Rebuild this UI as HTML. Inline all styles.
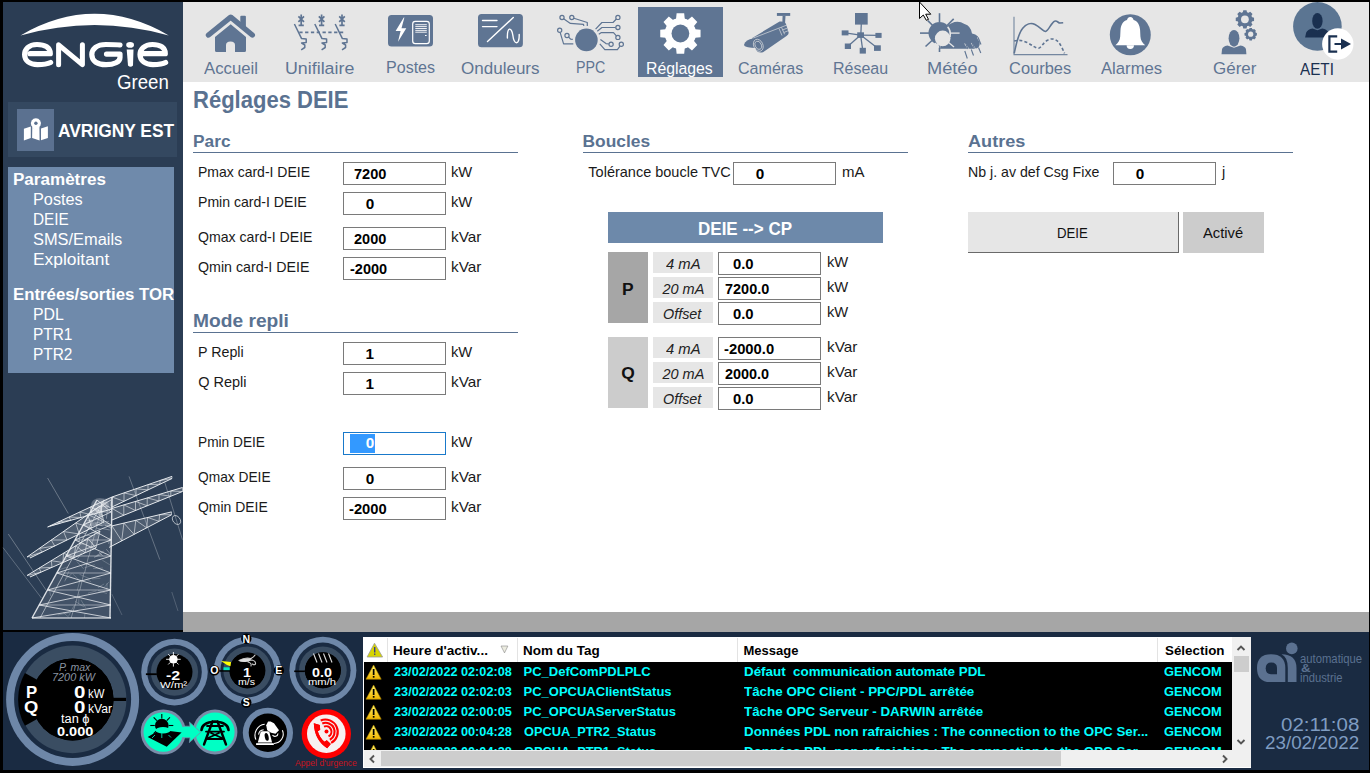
<!DOCTYPE html><html><head><meta charset="utf-8"><style>
html,body{margin:0;padding:0;width:1370px;height:773px;overflow:hidden;background:#000;}
body{position:relative;font-family:"Liberation Sans",sans-serif;}
body>div,body>span,body>svg{position:absolute;}
.t{white-space:pre;transform-origin:0 0;display:block;}
</style></head><body>
<div style="left:0px;top:0px;width:1370px;height:773px;background:#000;"></div>
<div style="left:3px;top:2px;width:180px;height:628px;background:#2b3d54;"></div>
<div style="left:183px;top:2px;width:1186px;height:80px;background:#e6e6e6;"></div>
<div style="left:183px;top:82px;width:1186px;height:530px;background:#ffffff;"></div>
<div style="left:183px;top:612px;width:1186px;height:20px;background:#a6a6a6;"></div>
<div style="left:3px;top:632px;width:1366px;height:138px;background:#1a2b42;"></div>
<div style="left:8px;top:102px;width:169px;height:55px;background:#344860;"></div>
<div style="left:17px;top:109px;width:37px;height:42px;background:#5b7190;"></div>
<div style="left:8px;top:167px;width:166px;height:206px;background:#6f8aab;"></div>
<div style="left:638px;top:7px;width:85px;height:70px;background:#5f7593;"></div>
<div style="left:193px;top:152px;width:325px;height:1px;background:#5a7291;"></div>
<div style="left:193px;top:332px;width:325px;height:1px;background:#5a7291;"></div>
<div style="left:583px;top:152px;width:325px;height:1px;background:#5a7291;"></div>
<div style="left:968px;top:152px;width:325px;height:1px;background:#5a7291;"></div>
<div style="left:343px;top:162px;width:101px;height:21px;background:#fff;border:1px solid #7a7a7a;"></div>
<div style="left:343px;top:192px;width:101px;height:21px;background:#fff;border:1px solid #7a7a7a;"></div>
<div style="left:343px;top:227px;width:101px;height:21px;background:#fff;border:1px solid #7a7a7a;"></div>
<div style="left:343px;top:257px;width:101px;height:21px;background:#fff;border:1px solid #7a7a7a;"></div>
<div style="left:343px;top:342px;width:101px;height:21px;background:#fff;border:1px solid #7a7a7a;"></div>
<div style="left:343px;top:372px;width:101px;height:21px;background:#fff;border:1px solid #7a7a7a;"></div>
<div style="left:343px;top:432px;width:101px;height:21px;background:#fff;border:1px solid #1979ca;"></div>
<div style="left:350px;top:434px;width:25px;height:19px;background:#3399ff;"></div>
<div style="left:343px;top:467px;width:101px;height:21px;background:#fff;border:1px solid #7a7a7a;"></div>
<div style="left:343px;top:497px;width:101px;height:21px;background:#fff;border:1px solid #7a7a7a;"></div>
<div style="left:733px;top:162px;width:101px;height:21px;background:#fff;border:1px solid #7a7a7a;"></div>
<div style="left:1113px;top:162px;width:101px;height:21px;background:#fff;border:1px solid #7a7a7a;"></div>
<div style="left:608px;top:212px;width:275px;height:31px;background:#6d89aa;"></div>
<div style="left:608px;top:252px;width:40px;height:71px;background:#a6a6a6;"></div>
<div style="left:608px;top:337px;width:40px;height:71px;background:#cccccc;"></div>
<div style="left:653px;top:252px;width:60px;height:21px;background:#e6e6e6;"></div>
<div style="left:718px;top:252px;width:101px;height:21px;background:#fff;border:1px solid #7a7a7a;"></div>
<div style="left:653px;top:277px;width:60px;height:21px;background:#e6e6e6;"></div>
<div style="left:718px;top:277px;width:101px;height:21px;background:#fff;border:1px solid #7a7a7a;"></div>
<div style="left:653px;top:302px;width:60px;height:21px;background:#e6e6e6;"></div>
<div style="left:718px;top:302px;width:101px;height:21px;background:#fff;border:1px solid #7a7a7a;"></div>
<div style="left:653px;top:337px;width:60px;height:21px;background:#e6e6e6;"></div>
<div style="left:718px;top:337px;width:101px;height:21px;background:#fff;border:1px solid #7a7a7a;"></div>
<div style="left:653px;top:362px;width:60px;height:21px;background:#e6e6e6;"></div>
<div style="left:718px;top:362px;width:101px;height:21px;background:#fff;border:1px solid #7a7a7a;"></div>
<div style="left:653px;top:387px;width:60px;height:21px;background:#e6e6e6;"></div>
<div style="left:718px;top:387px;width:101px;height:21px;background:#fff;border:1px solid #7a7a7a;"></div>
<div style="left:968px;top:212px;width:211px;height:41px;background:#e6e6e6;box-shadow:inset -1px -1px 0 #6a6a6a;"></div>
<div style="left:1183px;top:212px;width:81px;height:41px;background:#cccccc;"></div>
<div style="left:363px;top:637px;width:888px;height:131px;background:#ffffff;"></div>
<div style="left:364px;top:662px;width:868px;height:88px;background:#000000;"></div>
<div style="left:387px;top:638px;width:1px;height:24px;background:#e3e3e3;"></div>
<div style="left:517px;top:638px;width:1px;height:24px;background:#e3e3e3;"></div>
<div style="left:737px;top:638px;width:1px;height:24px;background:#e3e3e3;"></div>
<div style="left:1157px;top:638px;width:1px;height:24px;background:#e3e3e3;"></div>
<div style="left:1232px;top:637px;width:19px;height:113px;background:#f0f0f0;"></div>
<div style="left:1234px;top:655.5px;width:14.5px;height:16px;background:#cdcdcd;"></div>
<svg width="1370" height="773" viewBox="0 0 1370 773" style="position:absolute;left:0;top:0;">
<path d="M20.5,35.4 Q94.6,-7.75 168.8,35.4 Q94.6,14.4 20.5,35.4 Z" fill="#ffffff"/>
<g fill="none" stroke="#ffffff" stroke-width="5" stroke-linecap="round" stroke-linejoin="round"><path d="M30,53.7 L50.3,53.7 C50.3,47.5 45,44.5 37,44.5 C28.5,44.5 24.6,49.5 24.6,54.6 C24.6,61 30,64.6 37.5,64.6 C43.5,64.6 47.5,64 50.6,62.5" stroke-width="5.2"/><path d="M58.6,64.7 L58.6,44.8 L82.4,64.7 L82.4,44.8" stroke-width="5"/><path d="M120,45 C116,44.5 112,44.5 106,44.5 C97,44.5 91.8,48.8 91.8,54.6 C91.8,61 97,64.7 106,64.7 C114,64.7 120,62 120,57.5 L120,54.1 L106.5,54.1" stroke-width="5.2"/><path d="M141,53.7 L165.3,53.7 C165.3,47.5 160,44.5 152.5,44.5 C144,44.5 140,49.5 140,54.6 C140,61 145.5,64.6 153,64.6 C159,64.6 163,64 165.6,62.5" stroke-width="5.2"/></g>
<ellipse cx="130.1" cy="44.9" rx="3.9" ry="2.8" fill="#ffffff"/>
<path d="M126.7,49.5 L133.5,49.5 L133,65.5 Q130.5,68 128,65.5 Z" fill="#ffffff"/>
<g fill="#ffffff"><path d="M23.9,128.8 L30.8,126.5 L30.8,138 L23.9,140.6 Z"/><path d="M32.3,126.5 L35.9,131 L39.4,126.5 L39.6,140.4 L32.1,138 Z"/><path d="M41,128.6 L47.9,126.3 L47.9,137.9 L41,140.3 Z"/><path d="M35.9,132.5 L31.3,125.3 A5,5 0 1 1 40.5,125.3 Z"/></g>
<circle cx="35.9" cy="123.2" r="1.7" fill="#5b7190"/>
<g fill="#5f7593"><path d="M208.5,35 L230.7,17.2 L252.3,35" fill="none" stroke="#5f7593" stroke-width="5.4" stroke-linecap="round" stroke-linejoin="round"/><rect x="240.3" y="15.8" width="5.6" height="12" rx="1"/><path d="M215,37 L230.7,24.3 L246,37 L246,50.5 Q246,52 244.5,52 L235,52 L235,45 Q235,41.5 230.5,41.5 Q226,41.5 226,45 L226,52 L216.5,52 Q215,52 215,50.5 Z"/></g>
<path d="M206,37.5 L230.7,17.6 L255,37.5" fill="none" stroke="#e6e6e6" stroke-width="0" />
<g fill="none" stroke="#5f7593" stroke-linejoin="round"><path d="M301.2,14.5 L301.2,25 M298.4,16.3 L304.0,21.8 M304.0,16.3 L298.4,21.8 M298.59999999999997,25.3 L303.8,25.3" stroke-width="1.7"/><path d="M294.4,24 L301.59999999999997,38.6 L306.2,38.9 L306.2,42.6 L301.59999999999997,43 L304.8,45 L304.8,47.5 L301.2,49.8" stroke-width="1.5"/><path d="M321.6,14.5 L321.6,25 M318.8,16.3 L324.40000000000003,21.8 M324.40000000000003,16.3 L318.8,21.8 M319.0,25.3 L324.20000000000005,25.3" stroke-width="1.7"/><path d="M314.8,24 L322.0,38.6 L326.6,38.9 L326.6,42.6 L322.0,43 L325.20000000000005,45 L325.20000000000005,47.5 L321.6,49.8" stroke-width="1.5"/><path d="M342,14.5 L342,25 M339.2,16.3 L344.8,21.8 M344.8,16.3 L339.2,21.8 M339.4,25.3 L344.6,25.3" stroke-width="1.7"/><path d="M335.2,24 L342.4,38.6 L347,38.9 L347,42.6 L342.4,43 L345.6,45 L345.6,47.5 L342,49.8" stroke-width="1.5"/><path d="M299.3,32.4 L345,32.4" stroke-width="1.6" stroke-dasharray="3.3,2.5"/></g>
<rect x="388" y="14.9" width="45" height="31.7" rx="3.5" fill="#5f7593"/>
<path d="M403.8,17.4 L395.6,31 L400.6,31 L398,41.8 L406.3,28.3 L401.5,28.3 L404.4,17.4 Z" fill="#ffffff"/>
<rect x="412.7" y="21.4" width="16.6" height="22.2" rx="2.6" fill="none" stroke="#ffffff" stroke-width="1.2"/>
<g stroke="#ffffff" stroke-width="0.9"><line x1="415.3" y1="24.7" x2="426.8" y2="24.7"/><line x1="415.3" y1="26.6" x2="426.8" y2="26.6"/><line x1="415.3" y1="28.5" x2="426.8" y2="28.5"/><line x1="415.3" y1="30.4" x2="426.8" y2="30.4"/><line x1="415.3" y1="32.2" x2="426.8" y2="32.2"/></g>
<rect x="425" y="35" width="1.6" height="1" fill="#ffffff"/>
<rect x="478" y="13.9" width="44.9" height="33.3" rx="3.5" fill="#5f7593"/>
<g fill="none" stroke="#ffffff" stroke-width="1.4" stroke-linecap="round"><line x1="482.5" y1="20.5" x2="497" y2="20.5"/><line x1="482.5" y1="26.6" x2="497" y2="26.6"/><line x1="487.5" y1="41.5" x2="513.3" y2="17.5"/><path d="M507.4,38 C507,27 511.5,26.5 512.8,35 C514,45 519.5,46 519.2,34.5"/></g>
<circle cx="586.4" cy="39.9" r="11.3" fill="#5f7593"/>
<g fill="none" stroke="#5f7593" stroke-width="1.2" stroke-linejoin="round"><path d="M563.6,18.8 L570.4,23.4 L583.5,24.4 L583.8,26"/><path d="M573.9,18.3 L587.3,22.5 L587.3,26"/><path d="M560.2,32.6 L563.6,43.8 L573.3,43.8"/><path d="M568.5,37 L570.6,39.1 L572.8,39.3"/><path d="M616.4,19 L613,22.5 L601.9,22.5 L595.6,29.2"/><path d="M615.6,27.5 L601.9,27.5 L597.3,31.3"/><path d="M616.4,35.8 L613.5,32.6 L601.4,32.6 L598.8,34.2"/><path d="M608.9,44 L606,43.6 L600.4,39.6"/><path d="M620,46.2 L617.4,49.6 L604.8,49.6 L599.8,43.8"/><circle cx="562" cy="17.5" r="2.1"/><circle cx="571.8" cy="17.5" r="2.1"/><circle cx="559.7" cy="30.3" r="2.1"/><circle cx="567" cy="35.5" r="2.1"/><circle cx="617.9" cy="17.4" r="2.1"/><circle cx="617.9" cy="27.5" r="2.1"/><circle cx="617.9" cy="37.4" r="2.1"/><circle cx="611.1" cy="44.3" r="2.1"/><circle cx="621.3" cy="44.3" r="2.1"/></g>
<path d="M676.06,18.83 L676.62,13.35 L684.18,13.35 L684.74,18.83 L687.71,20.06 L691.98,16.58 L697.32,21.92 L693.84,26.19 L695.07,29.16 L700.55,29.72 L700.55,37.28 L695.07,37.84 L693.84,40.81 L697.32,45.08 L691.98,50.42 L687.71,46.94 L684.74,48.17 L684.18,53.65 L676.62,53.65 L676.06,48.17 L673.09,46.94 L668.82,50.42 L663.48,45.08 L666.96,40.81 L665.73,37.84 L660.25,37.28 L660.25,29.72 L665.73,29.16 L666.96,26.19 L663.48,21.92 L668.82,16.58 L673.09,20.06 Z" fill="#ffffff"/><circle cx="680.4" cy="33.5" r="15.600000000000001" fill="#ffffff"/><circle cx="680.4" cy="33.5" r="8.9" fill="#5f7593"/>
<g fill="#5f7593"><rect x="776.9" y="13" width="13.3" height="2.9"/><path d="M782.6,15.8 L785.5,15.8 L785,24 L782.3,23.5 Z"/><path d="M752.3,37.9 L779.6,21.6 Q785,21 786,24 L788.6,32.5 Q789,34.5 786.5,36 L763,52.3 Q758,53.5 756,50 Z"/><path d="M744,44.5 Q746,39.5 753,38.6 L757,39.5 L760,47.5 Q755,48.5 748,47.3 Q744,46.5 744,44.5 Z"/></g>
<g fill="none" stroke="#e6e6e6" stroke-width="0.7" opacity="0.9"><ellipse cx="758.3" cy="45.3" rx="4.6" ry="6.3" transform="rotate(-25 758.3 45.3)"/><ellipse cx="758.3" cy="45.3" rx="3" ry="4.3" transform="rotate(-25 758.3 45.3)"/><path d="M753.3,38 L787,25"/><path d="M779,28.5 L782,35.5 M781.5,27.3 L784.6,34.3"/><path d="M782.5,30 L787,28.2 M783.8,32.5 L788,30.8"/></g>
<g fill="#5f7593"><rect x="855" y="13" width="12.7" height="11.6"/><rect x="857.2" y="32.3" width="6.8" height="5.6"/><rect x="841.7" y="30.4" width="6.8" height="5"/><rect x="875.4" y="32.9" width="6.2" height="5"/><rect x="844.8" y="43.5" width="6.2" height="5.5"/><rect x="859.7" y="47.8" width="6.2" height="5.8"/><rect x="874" y="45.3" width="6.8" height="5.6"/></g>
<g stroke="#5f7593" stroke-width="1.3"><line x1="860.8" y1="35" x2="861.3" y2="24"/><line x1="860.6" y1="35.1" x2="845" y2="32.9"/><line x1="860.6" y1="35.1" x2="878.5" y2="35.3"/><line x1="860.6" y1="35.1" x2="848" y2="46.2"/><line x1="860.6" y1="35.1" x2="862.8" y2="50.7"/><line x1="860.6" y1="35.1" x2="877.4" y2="48.1"/></g>
<g stroke="#5f7593" stroke-width="1.6" stroke-linecap="butt"><line x1="939.5" y1="13.2" x2="939.5" y2="22"/><line x1="920" y1="33.1" x2="929" y2="33.1"/><line x1="925.5" y1="46.5" x2="932" y2="40.5"/><line x1="927.8" y1="20.6" x2="933" y2="25.8"/><line x1="953.7" y1="18.9" x2="947" y2="25.5"/><line x1="939.5" y1="42" x2="939.5" y2="52"/></g>
<circle cx="939.5" cy="33.1" r="11" fill="#5f7593"/>
<path d="M940,48.7 L975.5,48.7 Q980,48 979.8,42 Q979.5,35 972,33.6 Q971,26 964.5,24 Q958,20 951.5,23.3 Q948,24.5 946.5,27 L942,40 Z" fill="#5f7593"/>
<path d="M946.5,27 Q941,21.5 939.5,28 Q936,27 933,30" fill="none" stroke="#e6e6e6" stroke-width="0"/>
<circle cx="942.7" cy="38.4" r="7.8" fill="#e6e6e6"/>
<path d="M947.6,26.8 Q951,30 950,37" fill="none" stroke="#e6e6e6" stroke-width="1.6"/>
<g stroke="#e6e6e6" stroke-width="1.3"><line x1="950" y1="33.1" x2="959.6" y2="33.1"/><line x1="948" y1="42" x2="954" y2="47"/><line x1="935" y1="43" x2="939" y2="47.5"/><line x1="964.8" y1="43.3" x2="968.8" y2="49.5"/><line x1="971.5" y1="43" x2="975.5" y2="49.5"/><line x1="977.5" y1="37.5" x2="981.5" y2="44"/></g>
<g stroke="#5f7593" stroke-width="1.1"><line x1="964.8" y1="51" x2="967.3" y2="58.5"/><line x1="971.3" y1="49.5" x2="973.5" y2="55.5"/><line x1="978.5" y1="47.5" x2="980.8" y2="53"/><line x1="965.5" y1="43" x2="968" y2="49"/><line x1="972" y1="42.5" x2="974.5" y2="48.5"/><line x1="978" y1="37.5" x2="981" y2="44.5"/></g>
<g fill="none" stroke="#5f7593"><path d="M1014,16.8 L1014,54.6 L1067.5,54.6" stroke-width="1.1" stroke-opacity="0.85"/><path d="M1014.2,53.4 C1016,45 1018,34 1022.5,28.5 C1026,24 1031,22.5 1035,24.5 C1040,27 1043,31.5 1045.5,31.5 C1048.5,31 1051,23 1054.5,21.3 C1057,20 1058,23 1060,23 L1063.2,22.8" stroke-width="1.6"/><path d="M1014.2,41 C1018,40 1022,40 1027,42.5 C1032,45 1036,48.5 1038.5,48.3 C1041,48 1043,43 1047,40.5 C1051,38 1055,38.5 1058.5,42 C1061,45 1063,50 1064.5,53.4" stroke-width="1.6" stroke-dasharray="3,2.2"/></g>
<circle cx="1130.3" cy="34.8" r="20.5" fill="#5f7593"/>
<path d="M1130.3,17 C1128.3,17 1127.3,18.5 1127,20 C1123,21 1120.8,25 1120.5,30 L1120.2,36.5 C1120,40.5 1118,43 1115.4,45.3 L1145.2,45.3 C1142.6,43 1140.6,40.5 1140.4,36.5 L1140.1,30 C1139.8,25 1137.6,21 1133.6,20 C1133.3,18.5 1132.3,17 1130.3,17 Z" fill="#ffffff"/>
<path d="M1126.6,45.3 A3.7,3.7 0 0 0 1134,45.3 Z" fill="#ffffff"/>
<path d="M1242.69,12.66 L1243.26,10.15 L1246.54,10.15 L1247.11,12.66 L1248.03,13.04 L1250.21,11.67 L1252.53,13.99 L1251.16,16.17 L1251.54,17.09 L1254.05,17.66 L1254.05,20.94 L1251.54,21.51 L1251.16,22.43 L1252.53,24.61 L1250.21,26.93 L1248.03,25.56 L1247.11,25.94 L1246.54,28.45 L1243.26,28.45 L1242.69,25.94 L1241.77,25.56 L1239.59,26.93 L1237.27,24.61 L1238.64,22.43 L1238.26,21.51 L1235.75,20.94 L1235.75,17.66 L1238.26,17.09 L1238.64,16.17 L1237.27,13.99 L1239.59,11.67 L1241.77,13.04 Z" fill="#5f7593"/><circle cx="1244.9" cy="19.3" r="7.3" fill="#5f7593"/><circle cx="1244.9" cy="19.3" r="3.9" fill="#e6e6e6"/>
<path d="M1248.94,29.73 L1249.51,28.01 L1251.89,28.01 L1252.46,29.73 L1252.62,29.80 L1254.23,28.98 L1255.92,30.67 L1255.10,32.28 L1255.17,32.44 L1256.89,33.01 L1256.89,35.39 L1255.17,35.96 L1255.10,36.12 L1255.92,37.73 L1254.23,39.42 L1252.62,38.60 L1252.46,38.67 L1251.89,40.39 L1249.51,40.39 L1248.94,38.67 L1248.78,38.60 L1247.17,39.42 L1245.48,37.73 L1246.30,36.12 L1246.23,35.96 L1244.51,35.39 L1244.51,33.01 L1246.23,32.44 L1246.30,32.28 L1245.48,30.67 L1247.17,28.98 L1248.78,29.80 Z" fill="#5f7593"/><circle cx="1250.7" cy="34.2" r="5.1" fill="#5f7593"/><circle cx="1250.7" cy="34.2" r="2.6" fill="#e6e6e6"/>
<path d="M1221.5,54.2 L1222,49.5 Q1222.5,46.5 1227.5,45.6 L1234,47.8 L1240.5,45.6 Q1245.5,46.5 1246,49.5 L1246.4,54.2 Z" fill="#5f7593"/>
<ellipse cx="1234" cy="38.3" rx="5.8" ry="8.8" fill="#e6e6e6"/>
<ellipse cx="1234" cy="38.3" rx="5.4" ry="8.4" fill="#5f7593"/>
<circle cx="1317.4" cy="26.4" r="24.3" fill="#5b7592"/>
<path d="M1305.1,37.6 L1306.2,32.5 Q1307.5,29.3 1312.6,28.4 L1317.4,30.3 L1322.2,28.4 Q1327.3,29.3 1328.6,32.5 L1329.7,37.6 Z" fill="#1a3050"/>
<ellipse cx="1317.4" cy="20.9" rx="5.7" ry="8.4" fill="#5b7592"/>
<ellipse cx="1317.4" cy="20.9" rx="5.2" ry="7.9" fill="#1a3050"/>
<circle cx="1337.8" cy="44" r="15.7" fill="#fff"/>
<path d="M1337.2,36.4 L1329.4,36.4 L1329.4,51.6 L1337.2,51.6" fill="none" stroke="#1a3050" stroke-width="2.2"/>
<line x1="1334.5" y1="44" x2="1342" y2="44" stroke="#1a3050" stroke-width="2"/>
<path d="M1341,38.6 L1351,44 L1341,49.4 Z" fill="#1a3050"/>
<path d="M919.5,2 L919.5,18.5 L923.3,15 L926.3,20.3 L928.5,19.4 L925.7,14.2 L930.8,14.2 Z" fill="#fff" stroke="#000" stroke-width="1"/>
</svg><svg width="1370" height="773" viewBox="0 0 1370 773" style="position:absolute;left:0;top:0;">
<circle cx="72.6" cy="699.4" r="66.5" fill="#6e87a8"/><circle cx="72.6" cy="699.4" r="58.5" fill="#1a2b42"/><circle cx="72.6" cy="699.4" r="53.8" fill="#3a4d62"/><circle cx="72.6" cy="699.4" r="41" fill="#000"/>
<path d="M72.6,699.4 L24.93,672.98 A54.5,54.5 0 0 0 24.93,725.82 Z" fill="#000"/>
<circle cx="72.6" cy="699.4" r="41" fill="#000"/>
<rect x="112.6" y="697.8" width="13.5" height="3.2" fill="#000"/>
<circle cx="174.5" cy="672.1" r="33.3" fill="#6e87a8"/><circle cx="174.5" cy="672.1" r="27.3" fill="#1a2b42"/><circle cx="174.5" cy="672.1" r="23.6" fill="#3a4d62"/><circle cx="174.5" cy="672.1" r="18" fill="#000"/>
<rect x="145.9" y="673.3" width="11" height="1.8" fill="#000"/>
<circle cx="173.4" cy="659.3" r="4.3" fill="#fff"/><line x1="177.40" y1="659.30" x2="180.70" y2="659.30" stroke="#fff" stroke-width="0.9"/><line x1="176.23" y1="662.13" x2="178.56" y2="664.46" stroke="#fff" stroke-width="0.9"/><line x1="173.40" y1="663.30" x2="173.40" y2="666.60" stroke="#fff" stroke-width="0.9"/><line x1="170.57" y1="662.13" x2="168.24" y2="664.46" stroke="#fff" stroke-width="0.9"/><line x1="169.40" y1="659.30" x2="166.10" y2="659.30" stroke="#fff" stroke-width="0.9"/><line x1="170.57" y1="656.47" x2="168.24" y2="654.14" stroke="#fff" stroke-width="0.9"/><line x1="173.40" y1="655.30" x2="173.40" y2="652.00" stroke="#fff" stroke-width="0.9"/><line x1="176.23" y1="656.47" x2="178.56" y2="654.14" stroke="#fff" stroke-width="0.9"/>
<circle cx="247.4" cy="670.4" r="33.6" fill="#6e87a8"/><circle cx="247.4" cy="670.4" r="27" fill="#1a2b42"/><circle cx="247.4" cy="670.4" r="24" fill="#3a4d62"/><circle cx="247.4" cy="670.4" r="18" fill="#000"/>
<circle cx="247.3" cy="670.4" r="17.6" fill="#000"/>
<path d="M221,661 L231,662 L230.5,666.2 L227,665 Z" fill="#ffff00"/>
<rect x="223.5" y="667.3" width="6.2" height="3.6" fill="#00e8c0"/>
<rect x="219.4" y="670.2" width="11" height="1.5" fill="#000"/>
<g fill="none" stroke="#ccc" stroke-width="1.1" stroke-linecap="round"><path d="M239,660.5 Q245,657 251,658.5 Q254,657 255,655"/><path d="M240,661 Q247,661.5 252,660 Q256,661 255.5,664 Q254,665.5 252.5,664"/><path d="M248,662 Q252,663 251,666"/></g>
<path d="M239,661 Q242,658 248,658.2 L252,658.5 L249,661.5 Q244,662.5 239,661 Z" fill="#ddd"/>
<circle cx="246.3" cy="638.8" r="5.2" fill="#000"/>
<circle cx="246.3" cy="702.5" r="5.2" fill="#000"/>
<circle cx="214.4" cy="670.4" r="5.2" fill="#000"/>
<circle cx="278.9" cy="670.4" r="5.2" fill="#000"/>
<circle cx="322.9" cy="670.3" r="33.5" fill="#6e87a8"/><circle cx="322.9" cy="670.3" r="27.7" fill="#1a2b42"/><circle cx="322.9" cy="670.3" r="23.8" fill="#3a4d62"/><circle cx="322.9" cy="670.3" r="18" fill="#000"/>
<circle cx="322.8" cy="670.3" r="17.9" fill="#000"/>
<rect x="294.2" y="670.5" width="10.7" height="1.6" fill="#000"/>
<g stroke="#ddd" stroke-width="1.1"><line x1="313.5" y1="653.5" x2="317.0" y2="662.5"/><line x1="318.5" y1="653.5" x2="322.0" y2="662.5"/><line x1="323.5" y1="653.5" x2="327.0" y2="662.5"/><line x1="328.5" y1="653.5" x2="332.0" y2="662.5"/></g>
<circle cx="163.3" cy="732" r="22.6" fill="#7a8ca8"/><circle cx="163.3" cy="732" r="19.8" fill="#00ffc4"/>
<circle cx="215" cy="732" r="22.4" fill="#7a8ca8"/><circle cx="215" cy="732" r="19.6" fill="#00ffc4"/>
<path d="M183.5,726.2 L190,726.2 L189.4,722.1 L200.8,732.2 L189.4,742.6 L190,737.8 L183.5,737.8 Z" fill="#00ffc4" stroke="#7a8ca8" stroke-width="0.8"/>
<rect x="182" y="726.9" width="8" height="10.2" fill="#00ffc4"/>
<circle cx="161.8" cy="725.5" r="6.8" fill="#000"/><line x1="168.80" y1="725.50" x2="173.30" y2="725.50" stroke="#000" stroke-width="1.1"/><line x1="166.75" y1="730.45" x2="169.93" y2="733.63" stroke="#000" stroke-width="1.1"/><line x1="161.80" y1="732.50" x2="161.80" y2="737.00" stroke="#000" stroke-width="1.1"/><line x1="156.85" y1="730.45" x2="153.67" y2="733.63" stroke="#000" stroke-width="1.1"/><line x1="154.80" y1="725.50" x2="150.30" y2="725.50" stroke="#000" stroke-width="1.1"/><line x1="156.85" y1="720.55" x2="153.67" y2="717.37" stroke="#000" stroke-width="1.1"/><line x1="161.80" y1="718.50" x2="161.80" y2="714.00" stroke="#000" stroke-width="1.1"/><line x1="166.75" y1="720.55" x2="169.93" y2="717.37" stroke="#000" stroke-width="1.1"/>
<path d="M147.7,737 L160,729.8 L181.6,732.5 L166.7,746.7 Z" fill="#000"/>
<ellipse cx="163" cy="730.3" rx="7.5" ry="3.2" fill="#00ffc4"/>
<g stroke="#00c8a0" stroke-width="1"><line x1="161.8" y1="733" x2="161.8" y2="738"/><line x1="155" y1="735" x2="152" y2="738"/><line x1="168.5" y1="735" x2="171" y2="737.5"/></g>
<g fill="none" stroke="#000" stroke-linecap="round" stroke-linejoin="round"><path d="M201.5,730 Q202,722.5 215,721.5 Q228,722.5 228.5,730" stroke-width="2.6"/><path d="M204,744.5 L212.5,721.5 M226,744.5 L217.5,721.5" stroke-width="2.4"/><path d="M206,731.6 L224,731.6 M207,726 L223,726 M207.5,739 L222.5,739 M207,738.5 L219,733 M223,738.5 L211,733" stroke-width="1.8"/></g>
<circle cx="267.9" cy="732.8" r="25.1" fill="#6e87a8"/><circle cx="267.9" cy="732.8" r="19.2" fill="#000"/>
<g fill="#fff"><rect x="256.1" y="743.2" width="17.7" height="1.8"/><path d="M257.8,742.4 L260.5,732.5 Q261,731.3 262.5,731.3 L267.5,731.3 Q269,731.3 269.5,732.5 L272.1,742.4 Z"/><path d="M266.2,725.3 L268.1,721.4 L270.6,721.4 L274,723.3 L279,730.2 L275.5,733.7 L271.1,732.7 L267.2,730.2 Z"/></g>
<ellipse cx="266.7" cy="736.9" rx="1.9" ry="4" fill="#000" transform="rotate(-12 266.7 736.9)"/>
<g fill="none" stroke="#fff" stroke-width="1.1"><path d="M255.9,739.6 A11,11 0 0 1 264.7,724.3"/><path d="M258.6,734.6 A5.5,5.5 0 0 1 263.7,729.7"/><path d="M272.5,735 A3,3 0 0 0 278,733.5"/><path d="M282.4,730.2 A9.5,9.5 0 0 1 274,743.5"/></g>
<circle cx="326.3" cy="733.7" r="24.7" fill="#ff0000"/><circle cx="326.3" cy="733.7" r="19.3" fill="#f7f0f0"/>
<path d="M313.8,723.2 L319.8,725 L320.2,729.8 L317.8,731.2 Q319.5,737.5 324.5,741.8 L326.8,740.2 L330.8,744 L327.2,748.2 Q314.5,740 313.8,723.2 Z" fill="#ff0000"/>
<circle cx="326.5" cy="731.4" r="2" fill="#ff0000"/>
<g fill="none" stroke="#ff0000" stroke-width="2.1"><path d="M323.96,726.63 A5.4,5.4 0 0 1 328.52,736.41"/><path d="M322.27,723.45 A9,9 0 0 1 329.87,739.74"/><path d="M320.68,720.45 A12.4,12.4 0 0 1 331.15,742.90"/></g>
<path d="M313.8,723.2 L319.8,725 L320.2,729.8 L317.8,731.2 Q319.5,737.5 324.5,741.8 L326.8,740.2 L330.8,744 L327.2,748.2 Q314.5,740 313.8,723.2 Z" fill="#ff0000"/>
<path d="M1285.3,682.1 L1270,682.1 Q1257,682.1 1257,668 Q1257,654.2 1271,654.2 Q1285.3,654.2 1285.3,668 Z" fill="#5b7190"/>
<path d="M1277,674.2 L1271,674.2 Q1265.7,674.2 1265.7,668.3 Q1265.7,662.5 1271.3,662.5 Q1277,662.5 1277,668 Z" fill="#1a2b42"/>
<path d="M1281.5,654.2 Q1296.5,654.5 1296.5,668 L1296.5,682.1 L1287.8,682.1 L1287.8,668 Q1287.8,657 1281.5,654.2 Z" fill="#5b7190"/>
<circle cx="1291.8" cy="648.4" r="5.8" fill="#5b7190"/>
<g><line x1="47.6" y1="478.0" x2="68.3" y2="513.5" stroke="#eef1f4" stroke-width="0.6" opacity="0.55"/><line x1="8.3" y1="534.0" x2="46.0" y2="590.0" stroke="#eef1f4" stroke-width="0.6" opacity="0.55"/><line x1="3.0" y1="547.6" x2="41.4" y2="598.0" stroke="#eef1f4" stroke-width="0.6" opacity="0.45"/><line x1="129.0" y1="476.4" x2="159.8" y2="559.6" stroke="#eef1f4" stroke-width="0.6" opacity="0.5"/><line x1="164.5" y1="481.6" x2="182.5" y2="539.8" stroke="#eef1f4" stroke-width="0.6" opacity="0.5"/><line x1="171.8" y1="592.0" x2="178.0" y2="611.0" stroke="#eef1f4" stroke-width="0.5" opacity="0.4"/><line x1="111.8" y1="594.0" x2="122.0" y2="615.0" stroke="#eef1f4" stroke-width="0.5" opacity="0.4"/><path d="M32.0,618.0 L97.0,500.0 L112.0,497.0 L110.0,618.0 Z" fill="#eef1f4" opacity="0.12"/><line x1="32.0" y1="618.0" x2="97.0" y2="500.0" stroke="#eef1f4" stroke-width="1.4" opacity="0.9"/><line x1="110.0" y1="618.0" x2="112.0" y2="497.0" stroke="#eef1f4" stroke-width="1.4" opacity="0.9"/><line x1="40.0" y1="618.0" x2="104.0" y2="500.0" stroke="#eef1f4" stroke-width="0.8" opacity="0.7"/><line x1="97.0" y1="500.0" x2="111.0" y2="512.0" stroke="#eef1f4" stroke-width="0.9" opacity="0.85"/><line x1="111.0" y1="500.0" x2="90.4" y2="512.0" stroke="#eef1f4" stroke-width="0.9" opacity="0.85"/><line x1="90.4" y1="512.0" x2="111.0" y2="512.0" stroke="#eef1f4" stroke-width="0.7" opacity="0.7"/><line x1="104.0" y1="500.0" x2="100.0" y2="512.0" stroke="#eef1f4" stroke-width="0.6" opacity="0.6"/><line x1="90.4" y1="512.0" x2="111.0" y2="525.0" stroke="#eef1f4" stroke-width="0.9" opacity="0.85"/><line x1="111.0" y1="512.0" x2="83.2" y2="525.0" stroke="#eef1f4" stroke-width="0.9" opacity="0.85"/><line x1="83.2" y1="525.0" x2="111.0" y2="525.0" stroke="#eef1f4" stroke-width="0.7" opacity="0.7"/><line x1="100.7" y1="512.0" x2="96.7" y2="525.0" stroke="#eef1f4" stroke-width="0.6" opacity="0.6"/><line x1="83.2" y1="525.0" x2="111.0" y2="540.0" stroke="#eef1f4" stroke-width="0.9" opacity="0.85"/><line x1="111.0" y1="525.0" x2="75.0" y2="540.0" stroke="#eef1f4" stroke-width="0.9" opacity="0.85"/><line x1="75.0" y1="540.0" x2="111.0" y2="540.0" stroke="#eef1f4" stroke-width="0.7" opacity="0.7"/><line x1="97.1" y1="525.0" x2="93.1" y2="540.0" stroke="#eef1f4" stroke-width="0.6" opacity="0.6"/><line x1="75.0" y1="540.0" x2="111.0" y2="556.0" stroke="#eef1f4" stroke-width="0.9" opacity="0.85"/><line x1="111.0" y1="540.0" x2="66.2" y2="556.0" stroke="#eef1f4" stroke-width="0.9" opacity="0.85"/><line x1="66.2" y1="556.0" x2="111.0" y2="556.0" stroke="#eef1f4" stroke-width="0.7" opacity="0.7"/><line x1="93.0" y1="540.0" x2="89.0" y2="556.0" stroke="#eef1f4" stroke-width="0.6" opacity="0.6"/><line x1="66.2" y1="556.0" x2="111.0" y2="573.0" stroke="#eef1f4" stroke-width="0.9" opacity="0.85"/><line x1="111.0" y1="556.0" x2="56.8" y2="573.0" stroke="#eef1f4" stroke-width="0.9" opacity="0.85"/><line x1="56.8" y1="573.0" x2="111.0" y2="573.0" stroke="#eef1f4" stroke-width="0.7" opacity="0.7"/><line x1="88.6" y1="556.0" x2="84.6" y2="573.0" stroke="#eef1f4" stroke-width="0.6" opacity="0.6"/><line x1="56.8" y1="573.0" x2="111.0" y2="590.0" stroke="#eef1f4" stroke-width="0.9" opacity="0.85"/><line x1="111.0" y1="573.0" x2="47.4" y2="590.0" stroke="#eef1f4" stroke-width="0.9" opacity="0.85"/><line x1="47.4" y1="590.0" x2="111.0" y2="590.0" stroke="#eef1f4" stroke-width="0.7" opacity="0.7"/><line x1="83.9" y1="573.0" x2="79.9" y2="590.0" stroke="#eef1f4" stroke-width="0.6" opacity="0.6"/><line x1="47.4" y1="590.0" x2="111.0" y2="605.0" stroke="#eef1f4" stroke-width="0.9" opacity="0.85"/><line x1="111.0" y1="590.0" x2="39.2" y2="605.0" stroke="#eef1f4" stroke-width="0.9" opacity="0.85"/><line x1="39.2" y1="605.0" x2="111.0" y2="605.0" stroke="#eef1f4" stroke-width="0.7" opacity="0.7"/><line x1="79.2" y1="590.0" x2="75.2" y2="605.0" stroke="#eef1f4" stroke-width="0.6" opacity="0.6"/><line x1="39.2" y1="605.0" x2="111.0" y2="618.0" stroke="#eef1f4" stroke-width="0.9" opacity="0.85"/><line x1="111.0" y1="605.0" x2="32.0" y2="618.0" stroke="#eef1f4" stroke-width="0.9" opacity="0.85"/><line x1="32.0" y1="618.0" x2="111.0" y2="618.0" stroke="#eef1f4" stroke-width="0.7" opacity="0.7"/><line x1="75.1" y1="605.0" x2="71.1" y2="618.0" stroke="#eef1f4" stroke-width="0.6" opacity="0.6"/><path d="M47.6,527.0 L112.0,497.0 L112.0,509.0 L50.0,526.0 Z" fill="#eef1f4" opacity="0.18"/><line x1="47.6" y1="527.0" x2="112.0" y2="497.0" stroke="#eef1f4" stroke-width="1.0" opacity="0.95"/><line x1="50.0" y1="526.0" x2="112.0" y2="509.0" stroke="#eef1f4" stroke-width="1.0" opacity="0.95"/><line x1="47.6" y1="527.0" x2="60.3" y2="523.2" stroke="#eef1f4" stroke-width="0.7" opacity="0.85"/><line x1="60.3" y1="523.2" x2="58.3" y2="522.0" stroke="#eef1f4" stroke-width="0.7" opacity="0.85"/><line x1="58.3" y1="522.0" x2="70.7" y2="520.3" stroke="#eef1f4" stroke-width="0.7" opacity="0.85"/><line x1="70.7" y1="520.3" x2="69.1" y2="517.0" stroke="#eef1f4" stroke-width="0.7" opacity="0.85"/><line x1="69.1" y1="517.0" x2="81.0" y2="517.5" stroke="#eef1f4" stroke-width="0.7" opacity="0.85"/><line x1="81.0" y1="517.5" x2="79.8" y2="512.0" stroke="#eef1f4" stroke-width="0.7" opacity="0.85"/><line x1="79.8" y1="512.0" x2="91.3" y2="514.7" stroke="#eef1f4" stroke-width="0.7" opacity="0.85"/><line x1="91.3" y1="514.7" x2="90.5" y2="507.0" stroke="#eef1f4" stroke-width="0.7" opacity="0.85"/><line x1="90.5" y1="507.0" x2="101.7" y2="511.8" stroke="#eef1f4" stroke-width="0.7" opacity="0.85"/><line x1="101.7" y1="511.8" x2="101.3" y2="502.0" stroke="#eef1f4" stroke-width="0.7" opacity="0.85"/><line x1="101.3" y1="502.0" x2="112.0" y2="509.0" stroke="#eef1f4" stroke-width="0.7" opacity="0.85"/><line x1="112.0" y1="509.0" x2="112.0" y2="497.0" stroke="#eef1f4" stroke-width="0.7" opacity="0.85"/><path d="M27.0,557.0 L100.0,506.0 L104.0,522.0 L30.0,558.0 Z" fill="#eef1f4" opacity="0.18"/><line x1="27.0" y1="557.0" x2="100.0" y2="506.0" stroke="#eef1f4" stroke-width="1.0" opacity="0.95"/><line x1="30.0" y1="558.0" x2="104.0" y2="522.0" stroke="#eef1f4" stroke-width="1.0" opacity="0.95"/><line x1="27.0" y1="557.0" x2="42.3" y2="552.0" stroke="#eef1f4" stroke-width="0.7" opacity="0.85"/><line x1="42.3" y1="552.0" x2="39.2" y2="548.5" stroke="#eef1f4" stroke-width="0.7" opacity="0.85"/><line x1="39.2" y1="548.5" x2="54.7" y2="546.0" stroke="#eef1f4" stroke-width="0.7" opacity="0.85"/><line x1="54.7" y1="546.0" x2="51.3" y2="540.0" stroke="#eef1f4" stroke-width="0.7" opacity="0.85"/><line x1="51.3" y1="540.0" x2="67.0" y2="540.0" stroke="#eef1f4" stroke-width="0.7" opacity="0.85"/><line x1="67.0" y1="540.0" x2="63.5" y2="531.5" stroke="#eef1f4" stroke-width="0.7" opacity="0.85"/><line x1="63.5" y1="531.5" x2="79.3" y2="534.0" stroke="#eef1f4" stroke-width="0.7" opacity="0.85"/><line x1="79.3" y1="534.0" x2="75.7" y2="523.0" stroke="#eef1f4" stroke-width="0.7" opacity="0.85"/><line x1="75.7" y1="523.0" x2="91.7" y2="528.0" stroke="#eef1f4" stroke-width="0.7" opacity="0.85"/><line x1="91.7" y1="528.0" x2="87.8" y2="514.5" stroke="#eef1f4" stroke-width="0.7" opacity="0.85"/><line x1="87.8" y1="514.5" x2="104.0" y2="522.0" stroke="#eef1f4" stroke-width="0.7" opacity="0.85"/><line x1="104.0" y1="522.0" x2="100.0" y2="506.0" stroke="#eef1f4" stroke-width="0.7" opacity="0.85"/><path d="M27.0,575.5 L100.0,531.0 L96.0,548.0 L30.0,577.0 Z" fill="#eef1f4" opacity="0.18"/><line x1="27.0" y1="575.5" x2="100.0" y2="531.0" stroke="#eef1f4" stroke-width="1.0" opacity="0.95"/><line x1="30.0" y1="577.0" x2="96.0" y2="548.0" stroke="#eef1f4" stroke-width="1.0" opacity="0.95"/><line x1="27.0" y1="575.5" x2="41.0" y2="572.2" stroke="#eef1f4" stroke-width="0.7" opacity="0.85"/><line x1="41.0" y1="572.2" x2="39.2" y2="568.1" stroke="#eef1f4" stroke-width="0.7" opacity="0.85"/><line x1="39.2" y1="568.1" x2="52.0" y2="567.3" stroke="#eef1f4" stroke-width="0.7" opacity="0.85"/><line x1="52.0" y1="567.3" x2="51.3" y2="560.7" stroke="#eef1f4" stroke-width="0.7" opacity="0.85"/><line x1="51.3" y1="560.7" x2="63.0" y2="562.5" stroke="#eef1f4" stroke-width="0.7" opacity="0.85"/><line x1="63.0" y1="562.5" x2="63.5" y2="553.2" stroke="#eef1f4" stroke-width="0.7" opacity="0.85"/><line x1="63.5" y1="553.2" x2="74.0" y2="557.7" stroke="#eef1f4" stroke-width="0.7" opacity="0.85"/><line x1="74.0" y1="557.7" x2="75.7" y2="545.8" stroke="#eef1f4" stroke-width="0.7" opacity="0.85"/><line x1="75.7" y1="545.8" x2="85.0" y2="552.8" stroke="#eef1f4" stroke-width="0.7" opacity="0.85"/><line x1="85.0" y1="552.8" x2="87.8" y2="538.4" stroke="#eef1f4" stroke-width="0.7" opacity="0.85"/><line x1="87.8" y1="538.4" x2="96.0" y2="548.0" stroke="#eef1f4" stroke-width="0.7" opacity="0.85"/><line x1="96.0" y1="548.0" x2="100.0" y2="531.0" stroke="#eef1f4" stroke-width="0.7" opacity="0.85"/><path d="M112.0,497.0 L172.0,476.4 L172.0,478.5 L112.0,507.0 Z" fill="#eef1f4" opacity="0.18"/><line x1="112.0" y1="497.0" x2="172.0" y2="476.4" stroke="#eef1f4" stroke-width="1.0" opacity="0.95"/><line x1="112.0" y1="507.0" x2="172.0" y2="478.5" stroke="#eef1f4" stroke-width="1.0" opacity="0.95"/><line x1="112.0" y1="497.0" x2="124.0" y2="501.3" stroke="#eef1f4" stroke-width="0.7" opacity="0.85"/><line x1="124.0" y1="501.3" x2="124.0" y2="492.9" stroke="#eef1f4" stroke-width="0.7" opacity="0.85"/><line x1="124.0" y1="492.9" x2="136.0" y2="495.6" stroke="#eef1f4" stroke-width="0.7" opacity="0.85"/><line x1="136.0" y1="495.6" x2="136.0" y2="488.8" stroke="#eef1f4" stroke-width="0.7" opacity="0.85"/><line x1="136.0" y1="488.8" x2="148.0" y2="489.9" stroke="#eef1f4" stroke-width="0.7" opacity="0.85"/><line x1="148.0" y1="489.9" x2="148.0" y2="484.6" stroke="#eef1f4" stroke-width="0.7" opacity="0.85"/><line x1="148.0" y1="484.6" x2="160.0" y2="484.2" stroke="#eef1f4" stroke-width="0.7" opacity="0.85"/><line x1="160.0" y1="484.2" x2="160.0" y2="480.5" stroke="#eef1f4" stroke-width="0.7" opacity="0.85"/><line x1="160.0" y1="480.5" x2="172.0" y2="478.5" stroke="#eef1f4" stroke-width="0.7" opacity="0.85"/><line x1="172.0" y1="478.5" x2="172.0" y2="476.4" stroke="#eef1f4" stroke-width="0.7" opacity="0.85"/><path d="M112.0,508.4 L182.5,487.5 L182.5,491.5 L112.0,520.0 Z" fill="#eef1f4" opacity="0.18"/><line x1="112.0" y1="508.4" x2="182.5" y2="487.5" stroke="#eef1f4" stroke-width="1.0" opacity="0.95"/><line x1="112.0" y1="520.0" x2="182.5" y2="491.5" stroke="#eef1f4" stroke-width="1.0" opacity="0.95"/><line x1="112.0" y1="508.4" x2="123.8" y2="515.2" stroke="#eef1f4" stroke-width="0.7" opacity="0.85"/><line x1="123.8" y1="515.2" x2="123.8" y2="504.9" stroke="#eef1f4" stroke-width="0.7" opacity="0.85"/><line x1="123.8" y1="504.9" x2="135.5" y2="510.5" stroke="#eef1f4" stroke-width="0.7" opacity="0.85"/><line x1="135.5" y1="510.5" x2="135.5" y2="501.4" stroke="#eef1f4" stroke-width="0.7" opacity="0.85"/><line x1="135.5" y1="501.4" x2="147.2" y2="505.8" stroke="#eef1f4" stroke-width="0.7" opacity="0.85"/><line x1="147.2" y1="505.8" x2="147.2" y2="497.9" stroke="#eef1f4" stroke-width="0.7" opacity="0.85"/><line x1="147.2" y1="497.9" x2="159.0" y2="501.0" stroke="#eef1f4" stroke-width="0.7" opacity="0.85"/><line x1="159.0" y1="501.0" x2="159.0" y2="494.5" stroke="#eef1f4" stroke-width="0.7" opacity="0.85"/><line x1="159.0" y1="494.5" x2="170.8" y2="496.2" stroke="#eef1f4" stroke-width="0.7" opacity="0.85"/><line x1="170.8" y1="496.2" x2="170.8" y2="491.0" stroke="#eef1f4" stroke-width="0.7" opacity="0.85"/><line x1="170.8" y1="491.0" x2="182.5" y2="491.5" stroke="#eef1f4" stroke-width="0.7" opacity="0.85"/><line x1="182.5" y1="491.5" x2="182.5" y2="487.5" stroke="#eef1f4" stroke-width="0.7" opacity="0.85"/><path d="M112.0,525.9 L171.5,511.9 L171.5,514.8 L109.2,547.4 Z" fill="#eef1f4" opacity="0.18"/><line x1="112.0" y1="525.9" x2="171.5" y2="511.9" stroke="#eef1f4" stroke-width="1.0" opacity="0.95"/><line x1="109.2" y1="547.4" x2="171.5" y2="514.8" stroke="#eef1f4" stroke-width="1.0" opacity="0.95"/><line x1="112.0" y1="525.9" x2="121.7" y2="540.9" stroke="#eef1f4" stroke-width="0.7" opacity="0.85"/><line x1="121.7" y1="540.9" x2="123.9" y2="523.1" stroke="#eef1f4" stroke-width="0.7" opacity="0.85"/><line x1="123.9" y1="523.1" x2="134.1" y2="534.4" stroke="#eef1f4" stroke-width="0.7" opacity="0.85"/><line x1="134.1" y1="534.4" x2="135.8" y2="520.3" stroke="#eef1f4" stroke-width="0.7" opacity="0.85"/><line x1="135.8" y1="520.3" x2="146.6" y2="527.8" stroke="#eef1f4" stroke-width="0.7" opacity="0.85"/><line x1="146.6" y1="527.8" x2="147.7" y2="517.5" stroke="#eef1f4" stroke-width="0.7" opacity="0.85"/><line x1="147.7" y1="517.5" x2="159.0" y2="521.3" stroke="#eef1f4" stroke-width="0.7" opacity="0.85"/><line x1="159.0" y1="521.3" x2="159.6" y2="514.7" stroke="#eef1f4" stroke-width="0.7" opacity="0.85"/><line x1="159.6" y1="514.7" x2="171.5" y2="514.8" stroke="#eef1f4" stroke-width="0.7" opacity="0.85"/><line x1="171.5" y1="514.8" x2="171.5" y2="511.9" stroke="#eef1f4" stroke-width="0.7" opacity="0.85"/><ellipse cx="176.5" cy="520" rx="3.5" ry="5" fill="none" stroke="#eef1f4" stroke-width="0.8" opacity="0.8" transform="rotate(-40 176.5 520)"/><ellipse cx="100" cy="505" rx="9" ry="7" fill="#eef1f4" opacity="0.25"/><line x1="32.0" y1="618.0" x2="111.0" y2="618.0" stroke="#eef1f4" stroke-width="1.0" opacity="0.8"/><defs><clipPath id="tw"><path d="M32,618 L97,499 L112,497 L111,618 Z"/></clipPath></defs><g clip-path="url(#tw)"><line x1="90.2" y1="519.4" x2="88.1" y2="523.4" stroke="#eef1f4" stroke-width="0.6" opacity="0.6"/><line x1="91.3" y1="532.2" x2="98.2" y2="533.4" stroke="#eef1f4" stroke-width="0.6" opacity="0.6"/><line x1="102.8" y1="502.2" x2="107.2" y2="503.2" stroke="#eef1f4" stroke-width="0.6" opacity="0.6"/><line x1="107.0" y1="525.5" x2="111.9" y2="527.5" stroke="#eef1f4" stroke-width="0.6" opacity="0.6"/><line x1="110.1" y1="537.6" x2="108.6" y2="543.8" stroke="#eef1f4" stroke-width="0.6" opacity="0.6"/><line x1="66.9" y1="558.6" x2="61.8" y2="561.0" stroke="#eef1f4" stroke-width="0.6" opacity="0.6"/><line x1="94.6" y1="508.7" x2="99.6" y2="516.0" stroke="#eef1f4" stroke-width="0.6" opacity="0.6"/><line x1="103.2" y1="510.8" x2="100.6" y2="516.5" stroke="#eef1f4" stroke-width="0.6" opacity="0.6"/><line x1="81.0" y1="532.9" x2="86.1" y2="533.8" stroke="#eef1f4" stroke-width="0.6" opacity="0.6"/><line x1="90.5" y1="540.8" x2="94.7" y2="547.1" stroke="#eef1f4" stroke-width="0.6" opacity="0.6"/><line x1="91.0" y1="527.2" x2="84.5" y2="532.1" stroke="#eef1f4" stroke-width="0.6" opacity="0.6"/><line x1="102.2" y1="514.6" x2="101.5" y2="523.9" stroke="#eef1f4" stroke-width="0.6" opacity="0.6"/><line x1="84.2" y1="543.8" x2="79.5" y2="544.1" stroke="#eef1f4" stroke-width="0.6" opacity="0.6"/><line x1="105.0" y1="525.1" x2="111.2" y2="528.3" stroke="#eef1f4" stroke-width="0.6" opacity="0.6"/><line x1="106.6" y1="502.4" x2="101.1" y2="507.4" stroke="#eef1f4" stroke-width="0.6" opacity="0.6"/><line x1="81.8" y1="552.5" x2="77.5" y2="558.7" stroke="#eef1f4" stroke-width="0.6" opacity="0.6"/><line x1="93.4" y1="534.8" x2="84.9" y2="539.5" stroke="#eef1f4" stroke-width="0.6" opacity="0.6"/><line x1="101.7" y1="528.4" x2="109.8" y2="530.0" stroke="#eef1f4" stroke-width="0.6" opacity="0.6"/><line x1="111.7" y1="538.8" x2="106.9" y2="541.9" stroke="#eef1f4" stroke-width="0.6" opacity="0.6"/><line x1="102.8" y1="523.1" x2="109.6" y2="523.6" stroke="#eef1f4" stroke-width="0.6" opacity="0.6"/><line x1="93.9" y1="510.1" x2="102.3" y2="511.7" stroke="#eef1f4" stroke-width="0.6" opacity="0.6"/><line x1="97.5" y1="507.8" x2="100.6" y2="516.5" stroke="#eef1f4" stroke-width="0.6" opacity="0.6"/><line x1="102.3" y1="504.8" x2="100.8" y2="514.0" stroke="#eef1f4" stroke-width="0.6" opacity="0.6"/><line x1="106.3" y1="549.2" x2="110.4" y2="554.1" stroke="#eef1f4" stroke-width="0.6" opacity="0.6"/><line x1="108.9" y1="521.5" x2="104.0" y2="522.2" stroke="#eef1f4" stroke-width="0.6" opacity="0.6"/><line x1="96.0" y1="510.6" x2="101.1" y2="515.2" stroke="#eef1f4" stroke-width="0.6" opacity="0.6"/><line x1="86.6" y1="535.3" x2="93.1" y2="535.4" stroke="#eef1f4" stroke-width="0.6" opacity="0.6"/><line x1="100.2" y1="522.2" x2="92.1" y2="523.4" stroke="#eef1f4" stroke-width="0.6" opacity="0.6"/><line x1="99.7" y1="530.9" x2="97.5" y2="534.6" stroke="#eef1f4" stroke-width="0.6" opacity="0.6"/><line x1="102.2" y1="554.0" x2="94.0" y2="557.3" stroke="#eef1f4" stroke-width="0.6" opacity="0.6"/><line x1="95.2" y1="523.5" x2="102.6" y2="526.0" stroke="#eef1f4" stroke-width="0.6" opacity="0.6"/><line x1="96.1" y1="503.7" x2="100.0" y2="506.8" stroke="#eef1f4" stroke-width="0.6" opacity="0.6"/><line x1="87.1" y1="520.4" x2="92.0" y2="520.4" stroke="#eef1f4" stroke-width="0.6" opacity="0.6"/><line x1="100.3" y1="506.1" x2="109.5" y2="506.8" stroke="#eef1f4" stroke-width="0.6" opacity="0.6"/><line x1="81.9" y1="536.8" x2="86.2" y2="541.2" stroke="#eef1f4" stroke-width="0.6" opacity="0.6"/><line x1="88.3" y1="521.8" x2="79.4" y2="526.4" stroke="#eef1f4" stroke-width="0.6" opacity="0.6"/><line x1="96.3" y1="528.0" x2="100.8" y2="529.2" stroke="#eef1f4" stroke-width="0.6" opacity="0.6"/><line x1="92.6" y1="520.6" x2="88.4" y2="523.1" stroke="#eef1f4" stroke-width="0.6" opacity="0.6"/><line x1="111.2" y1="501.4" x2="110.8" y2="506.2" stroke="#eef1f4" stroke-width="0.6" opacity="0.6"/><line x1="79.9" y1="532.6" x2="79.1" y2="542.4" stroke="#eef1f4" stroke-width="0.6" opacity="0.6"/><line x1="98.8" y1="551.8" x2="103.0" y2="556.3" stroke="#eef1f4" stroke-width="0.6" opacity="0.6"/><line x1="107.3" y1="510.0" x2="106.4" y2="518.7" stroke="#eef1f4" stroke-width="0.6" opacity="0.6"/><line x1="91.9" y1="519.8" x2="83.7" y2="525.3" stroke="#eef1f4" stroke-width="0.6" opacity="0.6"/><line x1="103.6" y1="551.2" x2="96.5" y2="555.7" stroke="#eef1f4" stroke-width="0.6" opacity="0.6"/><line x1="101.1" y1="513.6" x2="103.0" y2="517.4" stroke="#eef1f4" stroke-width="0.6" opacity="0.6"/><line x1="76.8" y1="561.5" x2="83.7" y2="568.9" stroke="#eef1f4" stroke-width="0.5" opacity="0.45"/><line x1="69.4" y1="612.6" x2="57.7" y2="615.0" stroke="#eef1f4" stroke-width="0.5" opacity="0.45"/><line x1="63.1" y1="612.5" x2="68.8" y2="617.2" stroke="#eef1f4" stroke-width="0.5" opacity="0.45"/><line x1="69.0" y1="570.8" x2="64.7" y2="581.4" stroke="#eef1f4" stroke-width="0.5" opacity="0.45"/><line x1="73.7" y1="606.2" x2="68.7" y2="615.8" stroke="#eef1f4" stroke-width="0.5" opacity="0.45"/><line x1="94.8" y1="564.7" x2="84.6" y2="567.7" stroke="#eef1f4" stroke-width="0.5" opacity="0.45"/><line x1="75.1" y1="601.3" x2="84.1" y2="607.0" stroke="#eef1f4" stroke-width="0.5" opacity="0.45"/><line x1="100.4" y1="578.3" x2="92.1" y2="579.0" stroke="#eef1f4" stroke-width="0.5" opacity="0.45"/><line x1="108.8" y1="582.1" x2="104.2" y2="587.4" stroke="#eef1f4" stroke-width="0.5" opacity="0.45"/><line x1="67.9" y1="567.0" x2="57.6" y2="570.2" stroke="#eef1f4" stroke-width="0.5" opacity="0.45"/><line x1="102.9" y1="568.0" x2="93.0" y2="568.7" stroke="#eef1f4" stroke-width="0.5" opacity="0.45"/><line x1="85.5" y1="579.3" x2="91.1" y2="581.7" stroke="#eef1f4" stroke-width="0.5" opacity="0.45"/><line x1="84.9" y1="613.4" x2="83.9" y2="625.0" stroke="#eef1f4" stroke-width="0.5" opacity="0.45"/><line x1="104.2" y1="583.9" x2="97.9" y2="587.6" stroke="#eef1f4" stroke-width="0.5" opacity="0.45"/><line x1="72.6" y1="573.9" x2="79.6" y2="580.4" stroke="#eef1f4" stroke-width="0.5" opacity="0.45"/><line x1="79.5" y1="574.3" x2="90.0" y2="578.9" stroke="#eef1f4" stroke-width="0.5" opacity="0.45"/><line x1="80.2" y1="579.5" x2="77.2" y2="590.5" stroke="#eef1f4" stroke-width="0.5" opacity="0.45"/><line x1="107.0" y1="583.1" x2="107.0" y2="592.3" stroke="#eef1f4" stroke-width="0.5" opacity="0.45"/><line x1="49.3" y1="588.8" x2="50.6" y2="595.8" stroke="#eef1f4" stroke-width="0.5" opacity="0.45"/><line x1="102.3" y1="560.2" x2="109.9" y2="564.8" stroke="#eef1f4" stroke-width="0.5" opacity="0.45"/><line x1="80.9" y1="599.9" x2="85.7" y2="607.7" stroke="#eef1f4" stroke-width="0.5" opacity="0.45"/><line x1="98.0" y1="590.5" x2="106.9" y2="593.6" stroke="#eef1f4" stroke-width="0.5" opacity="0.45"/><line x1="71.8" y1="573.7" x2="65.0" y2="579.6" stroke="#eef1f4" stroke-width="0.5" opacity="0.45"/><line x1="96.4" y1="590.9" x2="88.0" y2="593.2" stroke="#eef1f4" stroke-width="0.5" opacity="0.45"/><line x1="79.1" y1="593.7" x2="78.7" y2="603.8" stroke="#eef1f4" stroke-width="0.5" opacity="0.45"/></g></g>
</svg><span class="t " style="left:57.54px;top:122.05px;font-size:18.9px;line-height:18.9px;color:#fff;font-weight:bold;transform:scaleX(0.9195);">AVRIGNY EST</span>
<span class="t " style="left:117.08px;top:72.05px;font-size:20.3px;line-height:20.3px;color:#fff;transform:scaleX(0.9185);">Green</span>
<span class="t " style="left:12.53px;top:172.05px;font-size:16px;line-height:16px;color:#fff;font-weight:bold;transform:scaleX(1.0655);">Paramètres</span>
<span class="t " style="left:32.63px;top:192.05px;font-size:16px;line-height:16px;color:#fff;transform:scaleX(1.0164);">Postes</span>
<span class="t " style="left:32.70px;top:212.05px;font-size:16px;line-height:16px;color:#fff;transform:scaleX(0.9583);">DEIE</span>
<span class="t " style="left:33.13px;top:232.05px;font-size:16px;line-height:16px;color:#fff;transform:scaleX(1.0247);">SMS/Emails</span>
<span class="t " style="left:32.54px;top:252.05px;font-size:16px;line-height:16px;color:#fff;transform:scaleX(1.0855);">Exploitant</span>
<span class="t " style="left:12.55px;top:287.05px;font-size:16px;line-height:16px;color:#fff;font-weight:bold;transform:scaleX(1.0496);">Entrées/sorties TOR</span>
<span class="t " style="left:32.66px;top:307.05px;font-size:16px;line-height:16px;color:#fff;transform:scaleX(0.9906);">PDL</span>
<span class="t " style="left:32.69px;top:327.05px;font-size:16px;line-height:16px;color:#fff;transform:scaleX(0.9646);">PTR1</span>
<span class="t " style="left:32.69px;top:347.05px;font-size:16px;line-height:16px;color:#fff;transform:scaleX(0.9646);">PTR2</span>
<span class="t " style="left:204.30px;top:60.05px;font-size:16.3px;line-height:16.3px;color:#5f7593;transform:scaleX(1.0283);">Accueil</span>
<span class="t " style="left:285.43px;top:60.05px;font-size:16.3px;line-height:16.3px;color:#5f7593;transform:scaleX(1.0939);">Unifilaire</span>
<span class="t " style="left:385.57px;top:59.05px;font-size:16.3px;line-height:16.3px;color:#5f7593;transform:scaleX(0.9859);">Postes</span>
<span class="t " style="left:461.12px;top:60.05px;font-size:16.3px;line-height:16.3px;color:#5f7593;transform:scaleX(1.0454);">Onduleurs</span>
<span class="t " style="left:575.60px;top:59.05px;font-size:16.3px;line-height:16.3px;color:#5f7593;transform:scaleX(0.8762);">PPC</span>
<span class="t " style="left:737.66px;top:60.05px;font-size:16.3px;line-height:16.3px;color:#5f7593;transform:scaleX(0.9872);">Caméras</span>
<span class="t " style="left:832.97px;top:60.05px;font-size:16.3px;line-height:16.3px;color:#5f7593;transform:scaleX(0.9823);">Réseau</span>
<span class="t " style="left:927.20px;top:60.05px;font-size:16.3px;line-height:16.3px;color:#5f7593;transform:scaleX(1.1191);">Météo</span>
<span class="t " style="left:1009.14px;top:60.05px;font-size:16.3px;line-height:16.3px;color:#5f7593;transform:scaleX(1.0112);">Courbes</span>
<span class="t " style="left:1100.50px;top:60.05px;font-size:16.3px;line-height:16.3px;color:#5f7593;transform:scaleX(1.0233);">Alarmes</span>
<span class="t " style="left:1212.72px;top:60.05px;font-size:16.3px;line-height:16.3px;color:#5f7593;transform:scaleX(1.0420);">Gérer</span>
<span class="t " style="left:646.39px;top:60.05px;font-size:16.3px;line-height:16.3px;color:#fff;transform:scaleX(0.9705);">Réglages</span>
<span class="t " style="left:1300.40px;top:61.05px;font-size:16.3px;line-height:16.3px;color:#1a3050;transform:scaleX(0.9357);">AETI</span>
<span class="t " style="left:193.05px;top:88.05px;font-size:24.7px;line-height:24.7px;color:#5a7291;font-weight:bold;transform:scaleX(0.8918);">Réglages DEIE</span>
<span class="t " style="left:192.88px;top:133.05px;font-size:17.4px;line-height:17.4px;color:#5a7291;font-weight:bold;transform:scaleX(0.9944);">Parc</span>
<span class="t " style="left:192.73px;top:312.05px;font-size:18.9px;line-height:18.9px;color:#5a7291;font-weight:bold;transform:scaleX(1.0155);">Mode repli</span>
<span class="t " style="left:582.57px;top:133.05px;font-size:17.4px;line-height:17.4px;color:#5a7291;font-weight:bold;">Boucles</span>
<span class="t " style="left:967.91px;top:133.05px;font-size:17.4px;line-height:17.4px;color:#5a7291;font-weight:bold;transform:scaleX(1.0407);">Autres</span>
<span class="t " style="left:197.71px;top:165.05px;font-size:14.5px;line-height:14.5px;color:#1a1a1a;transform:scaleX(0.9652);">Pmax card-I DEIE</span>
<span class="t " style="left:451.38px;top:165.05px;font-size:14.5px;line-height:14.5px;color:#1a1a1a;transform:scaleX(1.0164);">kW</span>
<span class="t " style="left:353.70px;top:166.05px;font-size:15.3px;line-height:15.3px;color:#000;font-weight:bold;transform:scaleX(0.9527);">7200</span>
<span class="t " style="left:197.71px;top:195.05px;font-size:14.5px;line-height:14.5px;color:#1a1a1a;transform:scaleX(0.9703);">Pmin card-I DEIE</span>
<span class="t " style="left:451.38px;top:195.05px;font-size:14.5px;line-height:14.5px;color:#1a1a1a;transform:scaleX(1.0164);">kW</span>
<span class="t " style="left:365.75px;top:196.05px;font-size:15.3px;line-height:15.3px;color:#000;font-weight:bold;">0</span>
<span class="t " style="left:198.19px;top:230.05px;font-size:14.5px;line-height:14.5px;color:#1a1a1a;transform:scaleX(0.9734);">Qmax card-I DEIE</span>
<span class="t " style="left:451.35px;top:230.05px;font-size:14.5px;line-height:14.5px;color:#1a1a1a;transform:scaleX(1.0545);">kVar</span>
<span class="t " style="left:353.83px;top:231.05px;font-size:15.3px;line-height:15.3px;color:#000;font-weight:bold;transform:scaleX(0.9490);">2000</span>
<span class="t " style="left:198.19px;top:260.05px;font-size:14.5px;line-height:14.5px;color:#1a1a1a;transform:scaleX(0.9813);">Qmin card-I DEIE</span>
<span class="t " style="left:451.35px;top:260.05px;font-size:14.5px;line-height:14.5px;color:#1a1a1a;transform:scaleX(1.0545);">kVar</span>
<span class="t " style="left:349.91px;top:261.05px;font-size:15.3px;line-height:15.3px;color:#000;font-weight:bold;transform:scaleX(0.9483);">-2000</span>
<span class="t " style="left:197.69px;top:345.05px;font-size:14.5px;line-height:14.5px;color:#1a1a1a;transform:scaleX(0.9825);">P Repli</span>
<span class="t " style="left:451.38px;top:345.05px;font-size:14.5px;line-height:14.5px;color:#1a1a1a;transform:scaleX(1.0164);">kW</span>
<span class="t " style="left:365.50px;top:346.05px;font-size:15.3px;line-height:15.3px;color:#000;font-weight:bold;">1</span>
<span class="t " style="left:198.18px;top:375.05px;font-size:14.5px;line-height:14.5px;color:#1a1a1a;">Q Repli</span>
<span class="t " style="left:451.35px;top:375.05px;font-size:14.5px;line-height:14.5px;color:#1a1a1a;transform:scaleX(1.0545);">kVar</span>
<span class="t " style="left:365.50px;top:376.05px;font-size:15.3px;line-height:15.3px;color:#000;font-weight:bold;">1</span>
<span class="t " style="left:197.74px;top:435.05px;font-size:14.5px;line-height:14.5px;color:#1a1a1a;transform:scaleX(0.9444);">Pmin DEIE</span>
<span class="t " style="left:451.38px;top:435.05px;font-size:14.5px;line-height:14.5px;color:#1a1a1a;transform:scaleX(1.0164);">kW</span>
<span class="t " style="left:365.65px;top:435.05px;font-size:15.3px;line-height:15.3px;color:#fff;font-weight:bold;">0</span>
<span class="t " style="left:198.21px;top:470.05px;font-size:14.5px;line-height:14.5px;color:#1a1a1a;transform:scaleX(0.9486);">Qmax DEIE</span>
<span class="t " style="left:451.35px;top:470.05px;font-size:14.5px;line-height:14.5px;color:#1a1a1a;transform:scaleX(1.0545);">kVar</span>
<span class="t " style="left:365.75px;top:471.05px;font-size:15.3px;line-height:15.3px;color:#000;font-weight:bold;">0</span>
<span class="t " style="left:198.20px;top:500.05px;font-size:14.5px;line-height:14.5px;color:#1a1a1a;transform:scaleX(0.9611);">Qmin DEIE</span>
<span class="t " style="left:451.35px;top:500.05px;font-size:14.5px;line-height:14.5px;color:#1a1a1a;transform:scaleX(1.0545);">kVar</span>
<span class="t " style="left:349.40px;top:501.05px;font-size:15.3px;line-height:15.3px;color:#000;font-weight:bold;transform:scaleX(0.9642);">-2000</span>
<span class="t " style="left:588.35px;top:165.05px;font-size:14.5px;line-height:14.5px;color:#1a1a1a;">Tolérance boucle TVC</span>
<span class="t " style="left:755.75px;top:166.05px;font-size:15.3px;line-height:15.3px;color:#000;font-weight:bold;">0</span>
<span class="t " style="left:841.69px;top:165.05px;font-size:14.5px;line-height:14.5px;color:#1a1a1a;transform:scaleX(1.0347);">mA</span>
<span class="t " style="left:967.50px;top:165.05px;font-size:14.5px;line-height:14.5px;color:#1a1a1a;transform:scaleX(0.9761);">Nb j. av def Csg Fixe</span>
<span class="t " style="left:1135.65px;top:166.05px;font-size:15.3px;line-height:15.3px;color:#000;font-weight:bold;">0</span>
<span class="t " style="left:1221.97px;top:165.05px;font-size:14.5px;line-height:14.5px;color:#1a1a1a;">j</span>
<span class="t " style="left:697.85px;top:220.05px;font-size:18.5px;line-height:18.5px;color:#fff;font-weight:bold;transform:scaleX(0.9194);">DEIE --&gt; CP</span>
<span class="t " style="left:621.94px;top:281.05px;font-size:17.4px;line-height:17.4px;color:#111;font-weight:bold;">P</span>
<span class="t " style="left:621.25px;top:365.05px;font-size:17.4px;line-height:17.4px;color:#111;font-weight:bold;">Q</span>
<span class="t " style="left:665.87px;top:257.05px;font-size:14.5px;line-height:14.5px;color:#222;font-style:italic;transform:scaleX(1.0221);">4 mA</span>
<span class="t " style="left:733.39px;top:256.05px;font-size:15.3px;line-height:15.3px;color:#000;font-weight:bold;transform:scaleX(0.9700);">0.0</span>
<span class="t " style="left:827.28px;top:255.05px;font-size:14.5px;line-height:14.5px;color:#1a1a1a;transform:scaleX(1.0164);">kW</span>
<span class="t " style="left:662.42px;top:282.05px;font-size:14.5px;line-height:14.5px;color:#222;font-style:italic;">20 mA</span>
<span class="t " style="left:724.81px;top:281.05px;font-size:15.3px;line-height:15.3px;color:#000;font-weight:bold;transform:scaleX(0.9455);">7200.0</span>
<span class="t " style="left:827.28px;top:280.05px;font-size:14.5px;line-height:14.5px;color:#1a1a1a;transform:scaleX(1.0164);">kW</span>
<span class="t " style="left:663.06px;top:307.05px;font-size:14.5px;line-height:14.5px;color:#222;font-style:italic;transform:scaleX(0.9902);">Offset</span>
<span class="t " style="left:733.39px;top:306.05px;font-size:15.3px;line-height:15.3px;color:#000;font-weight:bold;transform:scaleX(0.9700);">0.0</span>
<span class="t " style="left:827.28px;top:305.05px;font-size:14.5px;line-height:14.5px;color:#1a1a1a;transform:scaleX(1.0164);">kW</span>
<span class="t " style="left:665.87px;top:342.05px;font-size:14.5px;line-height:14.5px;color:#222;font-style:italic;transform:scaleX(1.0221);">4 mA</span>
<span class="t " style="left:724.40px;top:341.05px;font-size:15.3px;line-height:15.3px;color:#000;font-weight:bold;transform:scaleX(0.9663);">-2000.0</span>
<span class="t " style="left:827.25px;top:340.05px;font-size:14.5px;line-height:14.5px;color:#1a1a1a;transform:scaleX(1.0545);">kVar</span>
<span class="t " style="left:662.42px;top:367.05px;font-size:14.5px;line-height:14.5px;color:#222;font-style:italic;">20 mA</span>
<span class="t " style="left:724.93px;top:366.05px;font-size:15.3px;line-height:15.3px;color:#000;font-weight:bold;transform:scaleX(0.9429);">2000.0</span>
<span class="t " style="left:827.25px;top:365.05px;font-size:14.5px;line-height:14.5px;color:#1a1a1a;transform:scaleX(1.0545);">kVar</span>
<span class="t " style="left:663.06px;top:392.05px;font-size:14.5px;line-height:14.5px;color:#222;font-style:italic;transform:scaleX(0.9902);">Offset</span>
<span class="t " style="left:733.39px;top:391.05px;font-size:15.3px;line-height:15.3px;color:#000;font-weight:bold;transform:scaleX(0.9700);">0.0</span>
<span class="t " style="left:827.25px;top:390.05px;font-size:14.5px;line-height:14.5px;color:#1a1a1a;transform:scaleX(1.0545);">kVar</span>
<span class="t " style="left:1056.93px;top:225.05px;font-size:15.5px;line-height:15.5px;color:#111;transform:scaleX(0.8524);">DEIE</span>
<span class="t " style="left:1203.00px;top:225.05px;font-size:15.5px;line-height:15.5px;color:#111;transform:scaleX(0.9514);">Activé</span>
<span class="t " style="left:58.95px;top:662.05px;font-size:10.5px;line-height:10.5px;color:#8a94a0;font-style:italic;">P. max</span>
<span class="t " style="left:52.43px;top:672.05px;font-size:10.5px;line-height:10.5px;color:#8a94a0;font-style:italic;transform:scaleX(1.0359);">7200 kW</span>
<span class="t " style="left:25.77px;top:684.05px;font-size:16.2px;line-height:16.2px;color:#fff;font-weight:bold;transform:scaleX(1.0347);">P</span>
<span class="t " style="left:23.59px;top:699.05px;font-size:16.2px;line-height:16.2px;color:#fff;font-weight:bold;transform:scaleX(1.1341);">Q</span>
<span class="t " style="left:74.41px;top:684.05px;font-size:16.2px;line-height:16.2px;color:#fff;font-weight:bold;transform:scaleX(1.2645);">0</span>
<span class="t " style="left:74.41px;top:699.05px;font-size:16.2px;line-height:16.2px;color:#fff;font-weight:bold;transform:scaleX(1.2645);">0</span>
<span class="t " style="left:88.12px;top:688.05px;font-size:12.5px;line-height:12.5px;color:#fff;transform:scaleX(0.9101);">kW</span>
<span class="t " style="left:88.07px;top:703.05px;font-size:12.5px;line-height:12.5px;color:#fff;transform:scaleX(0.9675);">kVar</span>
<span class="t " style="left:60.87px;top:713.05px;font-size:12px;line-height:12px;color:#fff;transform:scaleX(1.0641);">tan ϕ</span>
<span class="t " style="left:56.74px;top:725.05px;font-size:13px;line-height:13px;color:#fff;font-weight:bold;transform:scaleX(1.1175);">0.000</span>
<span class="t " style="left:166.31px;top:669.05px;font-size:13.5px;line-height:13.5px;color:#fff;font-weight:bold;transform:scaleX(1.1818);">-2</span>
<span class="t " style="left:159.90px;top:681.05px;font-size:9px;line-height:9px;color:#fff;transform:scaleX(1.2632);">W/m²</span>
<span class="t " style="left:242.76px;top:666.05px;font-size:13.5px;line-height:13.5px;color:#fff;font-weight:bold;transform:scaleX(1.0720);">1</span>
<span class="t " style="left:238.18px;top:678.05px;font-size:8.6px;line-height:8.6px;color:#fff;transform:scaleX(1.2343);">m/s</span>
<span class="t " style="left:311.67px;top:666.05px;font-size:13.5px;line-height:13.5px;color:#fff;font-weight:bold;transform:scaleX(1.0592);">0.0</span>
<span class="t " style="left:307.85px;top:678.05px;font-size:8.6px;line-height:8.6px;color:#fff;transform:scaleX(1.3024);">mm/h</span>
<span class="t " style="left:242.55px;top:634.05px;font-size:10.5px;line-height:10.5px;color:#fff;font-weight:bold;">N</span>
<span class="t " style="left:242.86px;top:697.05px;font-size:10.5px;line-height:10.5px;color:#fff;font-weight:bold;">S</span>
<span class="t " style="left:210.34px;top:665.05px;font-size:10.5px;line-height:10.5px;color:#fff;font-weight:bold;">O</span>
<span class="t " style="left:275.27px;top:665.05px;font-size:10.5px;line-height:10.5px;color:#fff;font-weight:bold;">E</span>
<span class="t " style="left:295.30px;top:759.05px;font-size:9px;line-height:9px;color:#c8141e;transform:scaleX(0.9553);">Appel d'urgence</span>
<span class="t " style="left:1300.23px;top:654.05px;font-size:11.9px;line-height:11.9px;color:#5b7190;transform:scaleX(0.9491);">automatique</span>
<span class="t " style="left:1300.79px;top:663.05px;font-size:10.8px;line-height:10.8px;color:#5b7190;font-weight:bold;transform:scaleX(1.2286);">&amp;</span>
<span class="t " style="left:1299.99px;top:673.05px;font-size:11.9px;line-height:11.9px;color:#5b7190;transform:scaleX(0.9444);">industrie</span>
<span class="t " style="left:1281.09px;top:716.05px;font-size:18px;line-height:18px;color:#7f9cc1;transform:scaleX(1.1399);">02:11:08</span>
<span class="t " style="left:1264.79px;top:734.05px;font-size:18px;line-height:18px;color:#7f9cc1;transform:scaleX(1.0444);">23/02/2022</span>
<span class="t " style="left:393.29px;top:644.05px;font-size:13px;line-height:13px;color:#000;font-weight:bold;transform:scaleX(1.0431);">Heure d'activ...</span>
<span class="t " style="left:523.49px;top:644.05px;font-size:13px;line-height:13px;color:#000;font-weight:bold;transform:scaleX(1.0345);">Nom du Tag</span>
<span class="t " style="left:743.52px;top:644.05px;font-size:13px;line-height:13px;color:#000;font-weight:bold;">Message</span>
<span class="t " style="left:1164.91px;top:644.05px;font-size:13px;line-height:13px;color:#000;font-weight:bold;transform:scaleX(1.0296);">Sélection</span>
<span class="t " style="left:393.83px;top:665.05px;font-size:13px;line-height:13px;color:#00ffff;font-weight:bold;transform:scaleX(0.9758);">23/02/2022 02:02:08</span>
<span class="t " style="left:523.52px;top:665.05px;font-size:13px;line-height:13px;color:#00ffff;font-weight:bold;">PC_DefComPDLPLC</span>
<span class="t " style="left:743.50px;top:665.05px;font-size:13px;line-height:13px;color:#00ffff;font-weight:bold;transform:scaleX(1.0286);">Défaut  communication automate PDL</span>
<span class="t " style="left:1163.51px;top:665.05px;font-size:13px;line-height:13px;color:#00ffff;font-weight:bold;transform:scaleX(0.9873);">GENCOM</span>
<span class="t " style="left:393.83px;top:685.05px;font-size:13px;line-height:13px;color:#00ffff;font-weight:bold;transform:scaleX(0.9769);">23/02/2022 02:02:03</span>
<span class="t " style="left:523.53px;top:685.05px;font-size:13px;line-height:13px;color:#00ffff;font-weight:bold;">PC_OPCUAClientStatus</span>
<span class="t " style="left:744.27px;top:685.05px;font-size:13px;line-height:13px;color:#00ffff;font-weight:bold;transform:scaleX(1.0293);">Tâche OPC Client - PPC/PDL arrêtée</span>
<span class="t " style="left:1163.51px;top:685.05px;font-size:13px;line-height:13px;color:#00ffff;font-weight:bold;transform:scaleX(0.9873);">GENCOM</span>
<span class="t " style="left:393.83px;top:705.05px;font-size:13px;line-height:13px;color:#00ffff;font-weight:bold;transform:scaleX(0.9758);">23/02/2022 02:00:05</span>
<span class="t " style="left:523.52px;top:705.05px;font-size:13px;line-height:13px;color:#00ffff;font-weight:bold;">PC_OPCUAServerStatus</span>
<span class="t " style="left:744.27px;top:705.05px;font-size:13px;line-height:13px;color:#00ffff;font-weight:bold;transform:scaleX(1.0265);">Tâche OPC Serveur - DARWIN arrêtée</span>
<span class="t " style="left:1163.51px;top:705.05px;font-size:13px;line-height:13px;color:#00ffff;font-weight:bold;transform:scaleX(0.9873);">GENCOM</span>
<span class="t " style="left:393.83px;top:725.05px;font-size:13px;line-height:13px;color:#00ffff;font-weight:bold;transform:scaleX(0.9758);">23/02/2022 00:04:28</span>
<span class="t " style="left:523.91px;top:725.05px;font-size:13px;line-height:13px;color:#00ffff;font-weight:bold;transform:scaleX(0.9829);">OPCUA_PTR2_Status</span>
<span class="t " style="left:743.50px;top:725.05px;font-size:13px;line-height:13px;color:#00ffff;font-weight:bold;transform:scaleX(1.0257);">Données PDL non rafraichies : The connection to the OPC Ser...</span>
<span class="t " style="left:1163.51px;top:725.05px;font-size:13px;line-height:13px;color:#00ffff;font-weight:bold;transform:scaleX(0.9873);">GENCOM</span>
<span class="t " style="left:393.83px;top:745.05px;font-size:13px;line-height:13px;color:#00ffff;font-weight:bold;transform:scaleX(0.9758);">23/02/2022 00:04:28</span>
<span class="t " style="left:523.91px;top:745.05px;font-size:13px;line-height:13px;color:#00ffff;font-weight:bold;transform:scaleX(0.9829);">OPCUA_PTR1_Status</span>
<span class="t " style="left:743.50px;top:745.05px;font-size:13px;line-height:13px;color:#00ffff;font-weight:bold;transform:scaleX(1.0257);">Données PDL non rafraichies : The connection to the OPC Ser...</span>
<span class="t " style="left:1163.51px;top:745.05px;font-size:13px;line-height:13px;color:#00ffff;font-weight:bold;transform:scaleX(0.9873);">GENCOM</span><div style="left:364px;top:750px;width:887px;height:17px;background:#f0f0f0;"></div>
<div style="left:381px;top:751px;width:680px;height:15px;background:#cdcdcd;"></div><svg width="1370" height="773" viewBox="0 0 1370 773" style="position:absolute;left:0;top:0;">
<defs><linearGradient id="wy" x1="0" y1="0" x2="0" y2="1"><stop offset="0" stop-color="#fff36a"/><stop offset="1" stop-color="#f0b400"/></linearGradient></defs>
<path d="M374.5,643.2 L382.6,657 L367.1,657 Z" fill="#d6d400" stroke="#9a9a9a" stroke-width="0.8" stroke-linejoin="round"/>
<rect x="374" y="647" width="1.4" height="5.5" fill="#3a3a8a"/><rect x="374" y="653.5" width="1.4" height="1.4" fill="#3a3a8a"/>
<defs><clipPath id="dc"><rect x="364" y="662" width="868" height="88"/></clipPath></defs><g clip-path="url(#dc)">
<path d="M373.6,665 L381.2,679.2 L366,679.2 Z" fill="url(#wy)" stroke="#b08a00" stroke-width="0.6" stroke-linejoin="round"/>
<rect x="372.8" y="669" width="1.7" height="6" fill="#000"/><rect x="372.8" y="676" width="1.7" height="1.7" fill="#000"/>
<path d="M373.6,685 L381.2,699.2 L366,699.2 Z" fill="url(#wy)" stroke="#b08a00" stroke-width="0.6" stroke-linejoin="round"/>
<rect x="372.8" y="689" width="1.7" height="6" fill="#000"/><rect x="372.8" y="696" width="1.7" height="1.7" fill="#000"/>
<path d="M373.6,705 L381.2,719.2 L366,719.2 Z" fill="url(#wy)" stroke="#b08a00" stroke-width="0.6" stroke-linejoin="round"/>
<rect x="372.8" y="709" width="1.7" height="6" fill="#000"/><rect x="372.8" y="716" width="1.7" height="1.7" fill="#000"/>
<path d="M373.6,725 L381.2,739.2 L366,739.2 Z" fill="url(#wy)" stroke="#b08a00" stroke-width="0.6" stroke-linejoin="round"/>
<rect x="372.8" y="729" width="1.7" height="6" fill="#000"/><rect x="372.8" y="736" width="1.7" height="1.7" fill="#000"/>
<path d="M373.6,745 L381.2,759.2 L366,759.2 Z" fill="url(#wy)" stroke="#b08a00" stroke-width="0.6" stroke-linejoin="round"/>
<rect x="372.8" y="749" width="1.7" height="6" fill="#000"/><rect x="372.8" y="756" width="1.7" height="1.7" fill="#000"/>
</g>
<path d="M501,646 L507.9,646 L504.5,652.9 Z" fill="#ecece0" stroke="#888" stroke-width="0.6"/>
<g fill="none" stroke="#555" stroke-width="1.9"><path d="M1237.5,650 L1241,646.5 L1244.5,650"/><path d="M1237.5,740 L1241,743.5 L1244.5,740"/><path d="M374,755.5 L370.5,759 L374,762.5"/><path d="M1223,755.5 L1226.5,759 L1223,762.5"/></g>
</svg>
</body></html>
